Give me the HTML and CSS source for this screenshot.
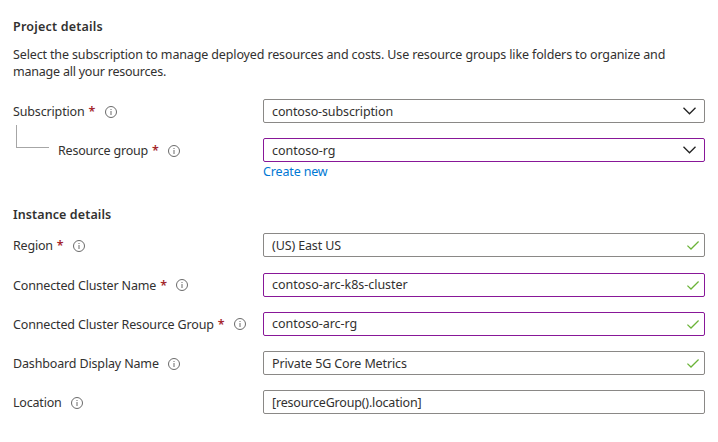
FILE: index.html
```
<!DOCTYPE html>
<html lang="en">
<head>
<meta charset="utf-8">
<title>Project details</title>
<link rel="stylesheet" href="styles.css">
</head>
<body>
<svg class="defs" width="0" height="0" aria-hidden="true">
  <symbol id="info" viewBox="0 0 12 12"><circle cx="6" cy="6" r="5.5" fill="none" stroke="#6a6a6a"/><path d="M6 5v4M6 3v1" stroke="#777" stroke-width="1.1"/></symbol>
  <symbol id="chevron" viewBox="0 0 13 8"><path d="M.5 .8l6 6 6-6" fill="none" stroke="#222" stroke-width="1.3"/></symbol>
  <symbol id="check" viewBox="0 0 12 9"><path d="M.4 4.6l3.6 3.4L11.6 .5" fill="none" stroke="#6bb338" stroke-width="1.3"/></symbol>
</svg>
<main class="form">
  <section class="project">
    <h2><span class="t-project">Project details</span></h2>
    <p class="intro"><span class="t-line1">Select the subscription to manage deployed resources and costs. Use resource groups like folders to organize and</span><br><span class="t-line2">manage all your resources.</span></p>
    <div class="row">
      <label><span class="t-sub">Subscription</span><b>*</b><svg class="info"><use href="#info"/></svg></label>
      <div class="field"><span class="v-sub">contoso-subscription</span><svg class="chevron"><use href="#chevron"/></svg></div>
    </div>
    <div class="row nested">
      <label><i class="branch"></i><span class="t-rg">Resource group</span><b>*</b><svg class="info"><use href="#info"/></svg></label>
      <div class="field edited"><span class="v-rg">contoso-rg</span><svg class="chevron"><use href="#chevron"/></svg></div>
    </div>
    <a class="create"><span class="t-create">Create new</span></a>
  </section>
  <section class="instance">
    <h2><span class="t-instance">Instance details</span></h2>
    <div class="row region">
      <label><span class="t-region">Region</span><b>*</b><svg class="info"><use href="#info"/></svg></label>
      <div class="field"><span class="v-region">(US) East US</span><svg class="check"><use href="#check"/></svg></div>
    </div>
    <div class="row">
      <label><span class="t-cluster">Connected Cluster Name</span><b>*</b><svg class="info raised"><use href="#info"/></svg></label>
      <div class="field edited"><span class="v-cluster">contoso-arc-k8s-cluster</span><svg class="check"><use href="#check"/></svg></div>
    </div>
    <div class="row">
      <label><span class="t-crg">Connected Cluster Resource Group</span><b>*</b><svg class="info raised"><use href="#info"/></svg></label>
      <div class="field edited"><span class="v-crg">contoso-arc-rg</span><svg class="check"><use href="#check"/></svg></div>
    </div>
    <div class="row">
      <label><span class="t-dash">Dashboard Display Name</span><svg class="info"><use href="#info"/></svg></label>
      <div class="field"><span class="v-dash">Private 5G Core Metrics</span><svg class="check"><use href="#check"/></svg></div>
    </div>
    <div class="row">
      <label><span class="t-loc">Location</span><svg class="info"><use href="#info"/></svg></label>
      <div class="field"><span class="v-loc">[resourceGroup().location]</span></div>
    </div>
  </section>
</main>
</body>
</html>
```
FILE: styles.css
```
* { box-sizing: border-box; }
body { margin: 0; background: #fff; color: #323130; font: 12.5px/17px "Noto Sans", "Open Sans", sans-serif; }
.defs { display: block; }
.form { width: 705px; padding: 18px 0 0 13px; white-space: nowrap; }
h2 { margin: 0; font-size: 12.5px; line-height: 17px; font-weight: 600; }
.intro { margin: 11px 0 19px; }
.row { display: grid; grid-template-columns: 250px 442px; height: 24px; margin-bottom: 15px; }
.row.region { margin-bottom: 16px; }
.row.nested { margin-bottom: 0; }
label { display: flex; align-items: center; height: 24px; letter-spacing: -.15px; }
label b { width: 7px; margin-left: 4px; font-weight: 600; font-size: 12.5px; line-height: 17px; color: #a4262c; }
.info { width: 12px; height: 12px; margin-left: 9px; position: relative; top: 1px; }
.info.raised { top: 0; }
.branch { width: 33px; height: 23px; margin: 0 9px 0 3px; border: solid #a6a6a6; border-width: 0 0 1px 1px; transform: translateY(-14px); }
.field { display: flex; align-items: center; justify-content: space-between; height: 24px; padding: 0 5px 0 8px; border: 1px solid #8a8886; border-radius: 2px; letter-spacing: -.12px; }
.edited { border-color: #881798; }
.chevron { width: 13px; height: 8px; margin-right: 3px; }
.check { width: 12px; height: 9px; }
.create { display: block; margin: 1px 0 0 250px; color: #0078d4; letter-spacing: -.15px; }
.instance { margin-top: 26px; }
.instance h2 { margin-bottom: 10px; }
.t-project { letter-spacing: .2px; }
.t-instance { letter-spacing: .1px; }
.t-line1 { letter-spacing: -.137px; }
.t-line2 { letter-spacing: -.22px; }
.t-rg { letter-spacing: -.2px; }
.t-region, .t-loc { letter-spacing: -.2px; }
.v-rg, .v-cluster, .v-crg { letter-spacing: -.03px; }
.v-cluster, .v-crg { margin-top: -2px; }
.v-loc { letter-spacing: -.18px; }
```
